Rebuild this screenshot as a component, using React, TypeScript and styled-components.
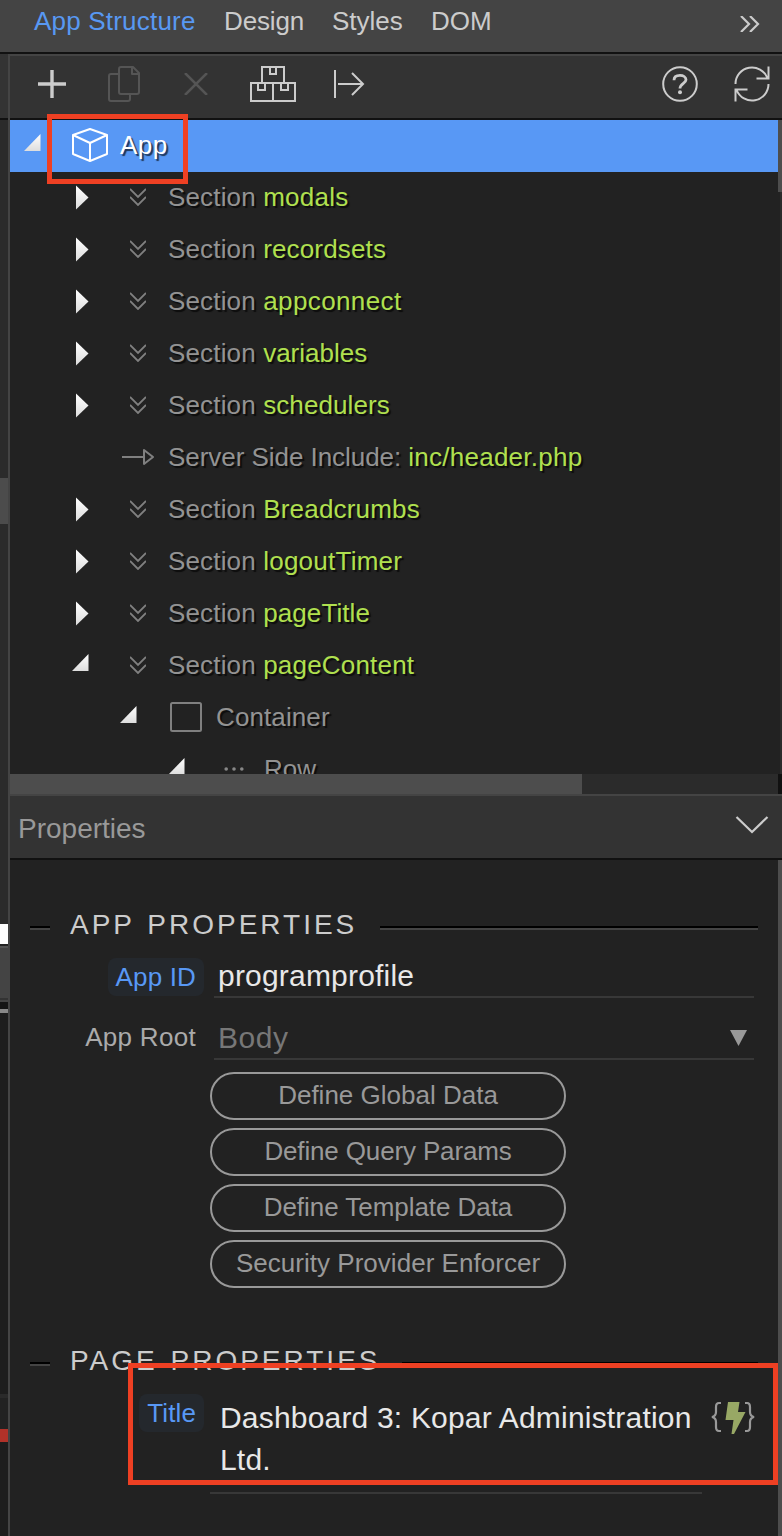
import React from "react";
import styled, { createGlobalStyle } from "styled-components";

const GlobalStyle = createGlobalStyle`
  * { box-sizing: border-box; }
  body {
    margin: 0;
    background: #222;
    font-family: "Liberation Sans", Arial, sans-serif;
  }
`;

const Page = styled.div`
  position: relative;
  width: 782px;
  height: 1536px;
  overflow: hidden;
  display: flex;
  flex-direction: column;
  background: #222;
`;

const TabBar = styled.header`
  flex: none;
  display: flex;
  height: 54px;
  padding: 5px 22px 0 34px;
  background: #444;
  border-bottom: 2px solid #111;
`;

const Tab = styled.span<{ $width: number; $active?: boolean; $spacing?: number }>`
  width: ${(p) => p.$width}px;
  font-size: 26px;
  line-height: 32px;
  letter-spacing: ${(p) => p.$spacing ?? 0}px;
  white-space: nowrap;
  color: ${(p) => (p.$active ? "#5898f2" : "#ccc")};
`;

const MoreTabs = styled.span`
  display: flex;
  margin: 11px 0 0 auto;
`;

const Main = styled.div`
  flex: 1;
  display: flex;
  min-height: 0;
`;

const Gutter = styled.aside`
  flex: none;
  width: 10px;
  border-right: 2px solid #444;
  display: flex;
  flex-direction: column;
`;

const Strip = styled.div<{ $h: number; $bg: string }>`
  flex: none;
  height: ${(p) => p.$h}px;
  background: ${(p) => p.$bg};
`;

const Panel = styled.div`
  flex: 1;
  min-width: 0;
  display: flex;
  flex-direction: column;
`;

const Toolbar = styled.div`
  flex: none;
  display: flex;
  align-items: center;
  height: 66px;
  padding: 0 12px 6px 26px;
  background: #333;
  border-top: 2px solid #444;
  border-bottom: 2px solid #111;
`;

const Tool = styled.span<{ $w: number; $gap?: number; $push?: boolean }>`
  display: flex;
  justify-content: center;
  width: ${(p) => p.$w}px;
  margin-left: ${(p) => (p.$push ? "auto" : `${p.$gap ?? 0}px`)};
`;

const TreeArea = styled.div`
  flex: none;
  display: flex;
  height: 654px;
`;

const Tree = styled.div`
  flex: 1;
  height: 654px;
  overflow: hidden;
`;

const VerticalTrack = styled.div`
  width: 4px;
  background: linear-gradient(90deg, #222 50%, #2b2b2b 50%);
`;

const Thumb = styled.div<{ $h: string; $w?: string }>`
  height: ${(p) => p.$h};
  width: ${(p) => p.$w ?? "100%"};
  background: #4d4d4d;
`;

const HorizontalTrack = styled.div`
  flex: none;
  height: 20px;
  margin-right: 4px;
  background: #2b2b2b;
  box-shadow: 4px 0 0 #111;
`;

const Row = styled.div<{ $level: number; $selected?: boolean }>`
  display: flex;
  align-items: center;
  height: 52px;
  padding-left: ${(p) => p.$level * 48}px;
  background: ${(p) => (p.$selected ? "#5898f5" : "transparent")};
  color: ${(p) => (p.$selected ? "#fff" : "#939393")};
`;

const Toggle = styled.span`
  display: flex;
  justify-content: flex-end;
  width: 32px;
  height: 52px;
  margin-right: 24px;
`;

const IconSlot = styled.span`
  display: flex;
  justify-content: center;
  width: 48px;
  margin-right: 6px;
  padding-bottom: 2px;
`;

const Label = styled.span<{ $spacing: number }>`
  font-size: 26px;
  line-height: 50px;
  height: 52px;
  white-space: pre;
  letter-spacing: ${(p) => p.$spacing}px;
  text-shadow: 2px 2px 1px rgba(0, 0, 0, 0.65);
`;

const Name = styled.span<{ $spacing: number }>`
  color: #b0e04f;
  letter-spacing: ${(p) => p.$spacing}px;
`;

const PropertiesHeader = styled.div`
  flex: none;
  display: flex;
  align-items: center;
  justify-content: space-between;
  height: 66px;
  padding: 4px 13px 0 8px;
  background: #333;
  border-top: 2px solid #444;
  border-bottom: 2px solid #111;
  color: #999;
  font-size: 28px;
`;

const Collapse = styled.span`
  display: flex;
  padding-bottom: 8px;
`;

const PropertiesBody = styled.div`
  flex: 1;
  padding-top: 46px;
  border-right: 4px solid #4d4d4d;
`;

const Legend = styled.div`
  display: flex;
  align-items: center;
  height: 36px;
  padding: 0 20px;
  font-size: 28px;
  letter-spacing: 3px;
  word-spacing: 2px;
  white-space: nowrap;
  color: #ccc;
`;

const Rule = styled.i<{ $w?: number }>`
  flex: ${(p) => (p.$w ? "none" : 1)};
  width: ${(p) => p.$w ?? 0}px;
  margin: 8px ${(p) => (p.$w ? 20 : 0)}px 0 0;
  height: 4px;
  background: #000;
  border-bottom: 2px solid #444;
`;

const LegendText = styled.span<{ $w: number }>`
  width: ${(p) => p.$w}px;
  padding-top: 2px;
`;

const FieldRow = styled.div<{ $top: number }>`
  display: flex;
  align-items: flex-end;
  height: 48px;
  margin-top: ${(p) => p.$top}px;
`;

const LabelCell = styled.div`
  flex: none;
  display: flex;
  justify-content: flex-end;
  width: 194px;
`;

const FieldLabel = styled.span<{ $pill?: boolean; $bottom: number; $spacing?: number }>`
  height: 38px;
  padding: 0 8px;
  margin-bottom: ${(p) => p.$bottom}px;
  border-radius: 8px;
  font-size: 26px;
  line-height: 38px;
  letter-spacing: ${(p) => p.$spacing ?? 0}px;
  white-space: nowrap;
  background: ${(p) => (p.$pill ? "#24282d" : "transparent")};
  color: ${(p) => (p.$pill ? "#5898f5" : "#aaa")};
`;

const Field = styled.div<{ $muted?: boolean }>`
  flex: none;
  display: flex;
  justify-content: space-between;
  align-items: center;
  width: 540px;
  height: 48px;
  margin-left: 10px;
  padding: 5px 7px 0 4px;
  border-bottom: 2px solid #383838;
  font-size: 30px;
  letter-spacing: ${(p) => (p.$muted ? 0.5 : 0.2)}px;
  color: ${(p) => (p.$muted ? "#777" : "#e8e8e8")};
`;

const ButtonStack = styled.div`
  display: flex;
  flex-direction: column;
  gap: 8px;
  width: 356px;
  margin: 12px 0 54px 200px;
`;

const PillButton = styled.button<{ $spacing: number }>`
  height: 48px;
  padding: 0 0 1px;
  border: 2px solid #999;
  border-radius: 24px;
  background: transparent;
  color: #999;
  font-family: inherit;
  font-size: 26px;
  letter-spacing: ${(p) => p.$spacing}px;
  white-space: nowrap;
`;

const TitleRow = styled.div`
  display: flex;
  align-items: flex-start;
  margin-top: 16px;
`;

const TitleField = styled.div`
  flex: none;
  width: 492px;
  height: 100px;
  margin-left: 6px;
  padding: 3px 0 0 10px;
  border-bottom: 2px solid #383838;
  font-size: 30px;
  line-height: 42px;
  letter-spacing: 0.19px;
  color: #e8e8e8;
  white-space: nowrap;
`;

const BindingSlot = styled.span`
  display: flex;
  margin: 7px 0 0 9px;
`;

const Highlight = styled.div<{ $x: number; $y: number; $w: number; $h: number }>`
  position: absolute;
  left: ${(p) => p.$x}px;
  top: ${(p) => p.$y}px;
  width: ${(p) => p.$w}px;
  height: ${(p) => p.$h}px;
  border: 5px solid #ee4023;
`;

const stroke = { fill: "none", stroke: "#ccc", strokeWidth: 2 } as const;

const PlusIcon = () => (
  <svg width="28" height="28" {...stroke} strokeWidth="3.4">
    <path d="M14 0V28M0 14H28" />
  </svg>
);
const CopyIcon = () => (
  <svg width="32" height="36" {...stroke} stroke="#555" strokeLinejoin="round">
    <path d="M13 1H25L31 7V26Q31 28 29 28H13Q11 28 11 26V3Q11 1 13 1ZM24 1V8H31" />
    <path d="M11 8H3Q1 8 1 10V33Q1 35 3 35H20Q22 35 22 33V29" />
  </svg>
);
const CloseIcon = () => (
  <svg width="24" height="22" {...stroke} stroke="#555" strokeWidth="2.5">
    <path d="M1 0L23 22M23 0L1 22" />
  </svg>
);
const BoxesIcon = () => (
  <svg width="46" height="36" {...stroke}>
    <path d="M12 17V1H34V17M1 17H45V35H1ZM23 17V35M20 1V8H26V1M8 17V24H15V17M31 17V24H38V17" />
  </svg>
);
const ExportIcon = () => (
  <svg width="32" height="28" {...stroke}>
    <path d="M2 0V28M5 14H30M19 3L30 14L19 25" />
  </svg>
);
const HelpIcon = () => (
  <svg width="36" height="36" {...stroke}>
    <circle cx="18" cy="18" r="16.8" />
    <path d="M12 14.2C12 10.6 14.8 9.4 18 9.4S24 11 24 13.8C24 17.2 18 17.8 18 22.5" strokeWidth="2.8" />
    <circle cx="18" cy="26.3" r="2" fill="#ccc" stroke="none" />
  </svg>
);
const RefreshIcon = () => (
  <svg width="36" height="36" {...stroke}>
    <path d="M1.5 18A16.5 16.5 0 0 1 33.4 12M34.5 18A16.5 16.5 0 0 1 2.6 24M34.5 0.5V12.5H22.5M1.5 35.5V23.5H13.5" />
  </svg>
);
const CubeIcon = () => (
  <svg width="36" height="36" {...stroke} stroke="#fff" strokeLinejoin="round">
    <path d="M18 2L35 8V27L18 34L1 27V8ZM1 8L18 16L35 8M18 16V34" />
  </svg>
);
const SectionIcon = () => (
  <svg width="16" height="18" {...stroke} stroke="#808080" strokeWidth="1.8">
    <path d="M0 1L8 9L16 1M0 9L8 17L16 9" />
  </svg>
);
const IncludeIcon = () => (
  <svg width="32" height="18" {...stroke} stroke="#808080" strokeLinejoin="round">
    <path d="M0 9H22M22 2L31 9L22 16Z" />
  </svg>
);
const ContainerIcon = () => (
  <svg width="32" height="30" {...stroke} stroke="#808080">
    <rect x="1" y="1" width="30" height="28" rx="1.5" />
  </svg>
);
const RowIcon = () => (
  <svg width="20" height="6" fill="#888">
    <circle cx="2.2" cy="3" r="1.8" />
    <circle cx="10" cy="3" r="1.8" />
    <circle cx="17.8" cy="3" r="1.8" />
  </svg>
);
const BindingIcon = () => (
  <svg width="44" height="34" {...stroke} stroke="#999" strokeWidth="2.2">
    <path d="M10 2H8Q5 2 5 6V11Q5 15 1 16Q5 17 5 21V26Q5 30 8 30H10" />
    <path d="M34 2H36Q39 2 39 6V11Q39 15 43 16Q39 17 39 21V26Q39 30 36 30H34" />
    <path d="M17 1H28.5L27 11H34.5L23 33H20.5L22.5 19H14.5Z" fill="#98a865" stroke="none" />
  </svg>
);

const Arrow = ({ open }: { open: boolean }) => (
  <svg width="20" height="52">
    <defs>
      <linearGradient id="arrowFill" x1="0" y1="0" x2="0" y2="1">
        <stop offset="0" stopColor="#fff" />
        <stop offset="1" stopColor="#ddd" />
      </linearGradient>
    </defs>
    <path
      d={open ? "M18.5 14V31H2Z" : "M6 13.5V37.5L18.5 25.5Z"}
      fill="url(#arrowFill)"
    />
  </svg>
);

type Node = {
  level: number;
  label: string;
  name?: string;
  open?: boolean;
  icon: React.ReactNode;
  spacing?: number;
  nameSpacing?: number;
};

const section = (name: string, nameSpacing: number, open = false): Node => ({
  level: 1,
  label: "Section ",
  name,
  open,
  nameSpacing,
  spacing: 0.15,
  icon: <SectionIcon />,
});

const nodes: Node[] = [
  { level: 0, label: "App", open: true, icon: <CubeIcon />, spacing: 0.5 },
  section("modals", 0.25),
  section("recordsets", 0.15),
  section("appconnect", 0.4),
  section("variables", 0),
  section("schedulers", 0.1),
  { level: 1, label: "Server Side Include: ", name: "inc/header.php", icon: <IncludeIcon />, spacing: -0.05, nameSpacing: 0.25 },
  section("Breadcrumbs", 0.2),
  section("logoutTimer", 0.25),
  section("pageTitle", 0.1),
  section("pageContent", 0.2, true),
  { level: 2, label: "Container", open: true, icon: <ContainerIcon />, spacing: 0.1 },
  { level: 3, label: "Row", open: true, icon: <RowIcon />, spacing: 0 },
];

const strips: [number, string][] = [
  [64, "#333"],
  [2, "#111"],
  [358, "#2b2b2b"],
  [46, "#4c4c4c"],
  [400, "#2b2b2b"],
  [20, "#fff"],
  [2, "#222"],
  [2, "#555"],
  [50, "#444"],
  [2, "#333"],
  [2, "#444"],
  [7, "#151515"],
  [4, "#888"],
  [381, "#1d1d1d"],
  [4, "#2a2a2a"],
  [31, "#222"],
  [13, "#b13229"],
  [94, "#1d1d1d"],
];

const buttons: [string, number][] = [
  ["Define Global Data", 0],
  ["Define Query Params", -0.15],
  ["Define Template Data", -0.05],
  ["Security Provider Enforcer", 0.03],
];

export default function App() {
  return (
    <>
      <GlobalStyle />
      <Page>
        <TabBar>
          <Tab $width={190} $active $spacing={0.2}>App Structure</Tab>
          <Tab $width={108} $spacing={-0.15}>Design</Tab>
          <Tab $width={99}>Styles</Tab>
          <Tab $width={70}>DOM</Tab>
          <MoreTabs>
            <svg width="20" height="16" {...stroke} strokeWidth="2.2">
              <path d="M1 0L9 8L1 16M10 0L18 8L10 16" />
            </svg>
          </MoreTabs>
        </TabBar>
        <Main>
          <Gutter>
            {strips.map(([h, bg], i) => (
              <Strip key={i} $h={h} $bg={bg} />
            ))}
          </Gutter>
          <Panel>
            <Toolbar>
              <Tool $w={32}><PlusIcon /></Tool>
              <Tool $w={32} $gap={40}><CopyIcon /></Tool>
              <Tool $w={24} $gap={44}><CloseIcon /></Tool>
              <Tool $w={46} $gap={42}><BoxesIcon /></Tool>
              <Tool $w={32} $gap={37}><ExportIcon /></Tool>
              <Tool $w={36} $push><HelpIcon /></Tool>
              <Tool $w={36} $gap={36}><RefreshIcon /></Tool>
            </Toolbar>
            <TreeArea>
              <Tree>
                {nodes.map((n, i) => (
                  <Row key={i} $level={n.level} $selected={i === 0}>
                    <Toggle>{n.open !== undefined && <Arrow open={n.open} />}</Toggle>
                    <IconSlot>{n.icon}</IconSlot>
                    <Label $spacing={n.spacing ?? 0}>
                      {n.label}
                      {n.name && <Name $spacing={n.nameSpacing ?? 0}>{n.name}</Name>}
                    </Label>
                  </Row>
                ))}
              </Tree>
              <VerticalTrack>
                <Thumb $h="72px" />
              </VerticalTrack>
            </TreeArea>
            <HorizontalTrack>
              <Thumb $h="20px" $w="572px" />
            </HorizontalTrack>
            <PropertiesHeader>
              Properties
              <Collapse>
                <svg width="34" height="18" {...stroke} strokeWidth="2.2">
                  <path d="M1.5 1L17 16L32.5 1" />
                </svg>
              </Collapse>
            </PropertiesHeader>
            <PropertiesBody>
              <Legend>
                <Rule $w={20} />
                <LegendText $w={310}>APP PROPERTIES</LegendText>
                <Rule />
              </Legend>
              <FieldRow $top={8}>
                <LabelCell><FieldLabel $pill $bottom={2} $spacing={0.15}>App ID</FieldLabel></LabelCell>
                <Field>programprofile</Field>
              </FieldRow>
              <FieldRow $top={14}>
                <LabelCell><FieldLabel $bottom={4} $spacing={0.3}>App Root</FieldLabel></LabelCell>
                <Field $muted>
                  Body
                  <svg width="17" height="16" fill="#999">
                    <path d="M0 0H17L8.5 16Z" />
                  </svg>
                </Field>
              </FieldRow>
              <ButtonStack>
                {buttons.map(([text, spacing]) => (
                  <PillButton key={text} $spacing={spacing}>{text}</PillButton>
                ))}
              </ButtonStack>
              <Legend>
                <Rule $w={20} />
                <LegendText $w={332}>PAGE PROPERTIES</LegendText>
                <Rule />
              </Legend>
              <TitleRow>
                <LabelCell><FieldLabel $pill $bottom={0} $spacing={0.1}>Title</FieldLabel></LabelCell>
                <TitleField>
                  Dashboard 3: Kopar Administration
                  <br />
                  Ltd.
                </TitleField>
                <BindingSlot><BindingIcon /></BindingSlot>
              </TitleRow>
            </PropertiesBody>
          </Panel>
        </Main>
        <Highlight $x={47} $y={114} $w={141} $h={70} />
        <Highlight $x={128} $y={1363} $w={650} $h={122} />
      </Page>
    </>
  );
}
